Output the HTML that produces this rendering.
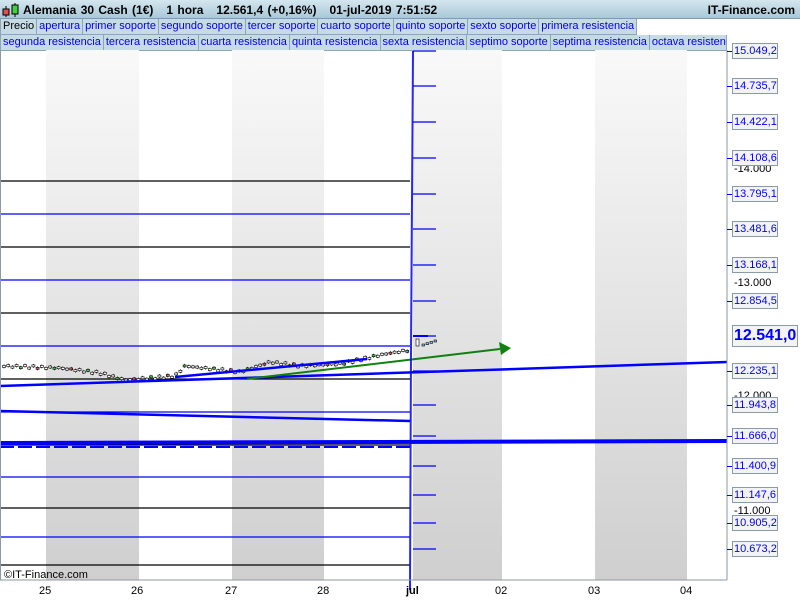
<!DOCTYPE html>
<html><head><meta charset="utf-8"><style>
*{margin:0;padding:0;box-sizing:border-box}
body{width:800px;height:600px;overflow:hidden;background:#fff;font-family:"Liberation Sans",sans-serif;position:relative}
#top{position:absolute;left:0;top:0;width:800px;height:19px;background:linear-gradient(#d4e6ef,#a9c8d8);border-bottom:1px solid #7f9aab;font-size:12px;font-weight:bold;color:#000}
#top .t{position:absolute;left:23px;top:3px;word-spacing:1px}
#top .r{position:absolute;right:5px;top:3px}
.row{position:absolute;left:0;height:16px;display:flex;background:#fff}
.row span{display:block;height:16px;background:#c7dbe6;border:1px solid #8da6b5;border-top:none;border-left:none;color:#0000ee;font-size:11px;line-height:15px;padding:0 2px;white-space:nowrap;overflow:hidden}
.lab{position:absolute;left:732px;width:46px;height:16px;border:1px solid #8a9aa6;background:#f3f3f3;color:#0000ff;font-size:11px;line-height:14px;text-align:left;padding-left:1px;white-space:nowrap}
.blk{position:absolute;left:734px;font-size:11px;color:#000}
.xl{position:absolute;top:585px;font-size:11px;color:#000}
</style></head><body>
<div id="top"><svg style="position:absolute;left:2px;top:2px" width="18" height="16"><line x1="4" y1="4" x2="4" y2="15" stroke="#000"/><rect x="1" y="7" width="6" height="6" fill="#e05050" stroke="#000"/><line x1="13" y1="1" x2="13" y2="15" stroke="#000"/><rect x="10" y="3" width="6" height="9" fill="#40d040" stroke="#000"/></svg><span class="t">Alemania 30 Cash (1€)&nbsp;&nbsp;&nbsp;1 hora&nbsp;&nbsp;&nbsp;12.561,4 (+0,16%)&nbsp;&nbsp;&nbsp;01-jul-2019 7:51:52</span><span class="r">IT-Finance.com</span></div>
<div class="row" style="top:19px;width:637px"><span style="color:#000;border-left:1px solid #8da6b5">Precio</span><span>apertura</span><span>primer soporte</span><span>segundo soporte</span><span>tercer soporte</span><span>cuarto soporte</span><span>quinto soporte</span><span>sexto soporte</span><span>primera resistencia</span></div>
<div class="row" style="top:35px;width:727px"><span style="border-left:1px solid #8da6b5">segunda resistencia</span><span>tercera resistencia</span><span>cuarta resistencia</span><span>quinta resistencia</span><span>sexta resistencia</span><span>septimo soporte</span><span>septima resistencia</span><span style="flex:1">octava resisten</span></div>
<svg id="ch" style="position:absolute;left:0;top:50px" width="800" height="550">
<defs><linearGradient id="g" x1="0" y1="0" x2="0" y2="1"><stop offset="0" stop-color="#f9f9f9"/><stop offset="1" stop-color="#cfcfcf"/></linearGradient></defs>
<rect x="46" y="0" width="93" height="530" fill="url(#g)"/>
<rect x="232" y="0" width="92" height="530" fill="url(#g)"/>
<rect x="413" y="0" width="89" height="530" fill="url(#g)"/>
<rect x="595" y="0" width="92" height="530" fill="url(#g)"/>
<g id="boxes"></g>
<g id="cd"></g>
<line x1="0" y1="336" x2="727" y2="312" stroke="#0000ff" stroke-width="2.5"/>
<line x1="0" y1="361" x2="410" y2="371" stroke="#0000ff" stroke-width="2.5"/>
<line x1="175" y1="327" x2="367" y2="309" stroke="#0000ff" stroke-width="2.5"/>
<line x1="0" y1="393" x2="727" y2="391" stroke="#0000ff" stroke-width="4"/>
<line x1="0" y1="397" x2="410" y2="397" stroke="#0000ff" stroke-width="2" stroke-dasharray="14 4"/>
<line x1="247" y1="329" x2="500" y2="299" stroke="#108010" stroke-width="2"/>
<polygon points="511,298 499,292 501,305" fill="#108010"/>
<polyline points="413,1 411,300 410,540" fill="none" stroke="#0000ff" stroke-width="2" opacity=".85"/>
<line x1="413" y1="286" x2="428" y2="286" stroke="#0000ff" stroke-width="2"/>
<line x1="0" y1="0" x2="0" y2="530" stroke="#8a9aa6" stroke-width="2"/>
<line x1="727" y1="0" x2="727" y2="530" stroke="#8a9aa6"/>
<line x1="0" y1="530" x2="727" y2="530" stroke="#8a9aa6"/>
<text x="4" y="528" font-size="11" fill="#000" font-family="Liberation Sans">©IT-Finance.com</text>
</svg>
<div class="blk" style="top:163px">-14.000</div>
<div class="blk" style="top:277px">-13.000</div>
<div class="blk" style="top:390px">-12.000</div>
<div class="blk" style="top:505px">-11.000</div>
<div id="labs"></div>
<div class="lab" style="top:325px;width:66px;height:22px;font-size:16px;font-weight:bold;line-height:20px">12.541,0</div>
<div class="xl" style="left:39px">25</div><div class="xl" style="left:131px">26</div><div class="xl" style="left:225px">27</div><div class="xl" style="left:317px">28</div><div class="xl" style="left:406px;font-weight:bold">jul</div><div class="xl" style="left:495px">02</div><div class="xl" style="left:588px">03</div><div class="xl" style="left:680px">04</div>
<script>
var b=document.getElementById('boxes'),h='';
var ys=[131,164,197,230,263,296,329,362,395,427,458,487,515];
for(var i=0;i<ys.length;i++){h+='<line x1="0" y1="'+ys[i]+'" x2="410" y2="'+ys[i]+'" stroke="'+(i%2?'#0000ff':'#000')+'" stroke-width="1.2"/>';}
var tk=[1,36,72,108,144,179,215,251,286,321,355,386,416,445,473,499];
for(i=0;i<tk.length;i++)h+='<line x1="413" y1="'+tk[i]+'" x2="436" y2="'+tk[i]+'" stroke="#0000ff" stroke-width="1.2"/>';
b.innerHTML=h;
var c='',p=[[3,316],[60,318],[100,323],[125,330],[175,326],[185,316],[240,322],[270,312],[300,316],[340,314],[385,304],[410,300]];
function py(x){for(var k=1;k<p.length;k++)if(x<=p[k][0]){var a=p[k-1],d=p[k];return a[1]+(d[1]-a[1])*(x-a[0])/(d[0]-a[0]);}return 300;}
for(var x=4;x<408;x+=4.2){var y=py(x)+Math.sin(x*0.7)*1.2;var s=Math.sin(x*1.3);var col=s>0.93?'#40d040':(s<-0.95?'#e06060':'#fff');c+='<line x1="'+x+'" y1="'+(y-2)+'" x2="'+x+'" y2="'+(y+2)+'" stroke="#000" stroke-width=".7"/><rect x="'+(x-1.5)+'" y="'+(y-1)+'" width="3" height="2" fill="'+col+'" stroke="#000" stroke-width=".6"/>';}
c+='<rect x="416" y="289" width="3" height="7" fill="#fff" stroke="#000" stroke-width=".6"/>';
for(x=422;x<438;x+=4)c+='<rect x="'+x+'" y="'+(294-(x-422)/3)+'" width="2.5" height="2" fill="#8cf" stroke="#000" stroke-width=".6"/>';
document.getElementById('cd').innerHTML=c;
var L=[[51,'15.049,2'],[86,'14.735,7'],[122,'14.422,1'],[158,'14.108,6'],[194,'13.795,1'],[229,'13.481,6'],[265,'13.168,1'],[301,'12.854,5'],[371,'12.235,1'],[405,'11.943,8'],[436,'11.666,0'],[466,'11.400,9'],[495,'11.147,6'],[523,'10.905,2'],[549,'10.673,2']],s='';
for(i=0;i<L.length;i++)s+='<div class="lab" style="top:'+(L[i][0]-8)+'px">'+L[i][1]+'</div><div style="position:absolute;left:727px;top:'+L[i][0]+'px;width:5px;height:1px;background:#00f"></div>';
document.getElementById('labs').innerHTML=s;
</script>
</body></html>
